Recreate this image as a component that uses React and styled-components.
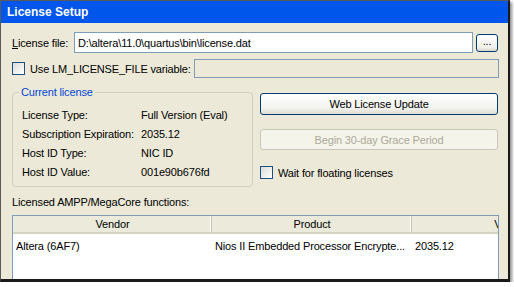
import styled, { createGlobalStyle } from 'styled-components'

const Global = createGlobalStyle`
	html, body { margin: 0; padding: 0; background: #ffffff; }
	body { font-family: "Liberation Sans", Arial, sans-serif; font-size: 11px; letter-spacing: -0.15px; color: #000; }
`

const Frame = styled.div`
	width: 507px;
	height: 278px;
	box-sizing: content-box;
	border-top: 1px solid #5a5a5a;
	border-left: 1px solid #5a5a5a;
	border-right: 2px solid #1a1a1a;
	border-bottom: 3px solid #1a1a1a;
	box-shadow: 2px 2px 3px rgba(0, 0, 0, 0.45);
	background: #ece9d8;
	overflow: hidden;
	display: flex;
	flex-direction: column;
`

const TitleBar = styled.div`
	height: 22px;
	flex: none;
	background: #0055ea;
	color: #fff;
	font-weight: bold;
	font-size: 12px;
	letter-spacing: 0;
	display: flex;
	align-items: center;
	padding-left: 6px;
	padding-bottom: 1px;
	box-sizing: border-box;
`

const Body = styled.div`
	flex: 1;
	padding: 9px 9px 0 11px;
	display: flex;
	flex-direction: column;
	min-height: 0;
`

const Row = styled.div`
	display: flex;
	align-items: center;
	height: ${p => p.$h || 21}px;
	margin-top: ${p => p.$mt || 0}px;
`

const Label = styled.span`
	width: ${p => (p.$w ? `${p.$w}px` : 'auto')};
	flex: none;
	white-space: nowrap;
	overflow: hidden;
`

const TextField = styled.div`
	flex: 1;
	height: ${p => p.$h || 21}px;
	box-sizing: border-box;
	border: 1px solid #7f9db9;
	background: ${p => (p.$disabled ? '#ece9d8' : '#fff')};
	display: flex;
	align-items: center;
	padding-left: 3px;
	white-space: nowrap;
	overflow: hidden;
`

const SmallButton = styled.div`
	width: 22px;
	height: 18px;
	flex: none;
	box-sizing: border-box;
	border: 1px solid #003c74;
	border-radius: 3px;
	background: linear-gradient(#ffffff, #f0efe8 80%, #d8d5c8);
	display: flex;
	align-items: center;
	justify-content: center;
	padding-bottom: 3px;
	margin: 0 1px 0 3px;
`

const Box = styled.span`
	width: 13px;
	height: 13px;
	flex: none;
	box-sizing: border-box;
	border: 1px solid #1c5180;
	background: linear-gradient(135deg, #dcdcd7, #ffffff);
	margin-right: 5px;
`

const Middle = styled.div`
	display: grid;
	grid-template-columns: 241px 238px;
	column-gap: 7px;
	margin-top: 14px;
`

const Group = styled.div`
	position: relative;
	height: 95px;
	box-sizing: border-box;
	border: 1px solid #d0d0bf;
	border-radius: 4px;
	padding: 12px 0 0 9px;
`

const Legend = styled.span`
	position: absolute;
	left: 6px;
	top: -8px;
	padding: 0 2px;
	background: #ece9d8;
	color: #0046d5;
	line-height: 14px;
`

const InfoGrid = styled.div`
	display: grid;
	grid-template-columns: 119px auto;
	grid-auto-rows: 19px;
	align-items: center;
`

const Side = styled.div`
	display: flex;
	flex-direction: column;
	padding-top: 1px;
`

const Button = styled.div`
	height: ${p => p.$h || 21}px;
	box-sizing: border-box;
	border: 1px solid ${p => (p.$disabled ? '#c9c7ba' : '#003c74')};
	border-radius: 3px;
	background: ${p => (p.$disabled ? '#f5f4ea' : 'linear-gradient(#ffffff, #f3f3ef 70%, #e0ddd2)')};
	color: ${p => (p.$disabled ? '#aca899' : '#000')};
	display: flex;
	align-items: center;
	justify-content: center;
	margin-top: ${p => p.$mt || 0}px;
`

const SectionLabel = styled.div`
	margin-top: 9px;
	line-height: 13px;
`

const List = styled.div`
	margin-top: 6px;
	flex: 1;
	border: 1px solid #7f9db9;
	border-bottom: none;
	background: #fff;
	overflow: hidden;
`

const ListRow = styled.div`
	display: grid;
	grid-template-columns: 199px 200px 200px;
	height: ${p => (p.$head ? 18 : 17)}px;
	align-items: center;
	white-space: nowrap;
	${p => p.$head && `
		background: #ebeadb;
		border-bottom: 2px solid #d6d2c2;
		box-sizing: border-box;
		margin-bottom: 3px;
	`}
`

const HeadCell = styled.div`
	height: 100%;
	display: flex;
	align-items: center;
	justify-content: center;
	box-shadow: inset -1px 0 0 #c7c5b2, inset -2px 0 0 #fff;
	overflow: hidden;
`

const Cell = styled.div`
	padding-left: 3px;
	overflow: hidden;
`

export default function App() {
	return (
		<>
			<Global />
			<Frame>
				<TitleBar>License Setup</TitleBar>
				<Body>
					<Row>
						<Label $w={62}><u>L</u>icense file:</Label>
						<TextField>D:\altera\11.0\quartus\bin\license.dat</TextField>
						<SmallButton>...</SmallButton>
					</Row>
					<Row $h={19} $mt={6}>
						<Box />
						<Label $w={164}>Use LM_LICENSE_FILE variable:</Label>
						<TextField $h={19} $disabled />
					</Row>
					<Middle>
						<Group>
							<Legend>Current license</Legend>
							<InfoGrid>
								<span>License Type:</span><span>Full Version (Eval)</span>
								<span>Subscription Expiration:</span><span>2035.12</span>
								<span>Host ID Type:</span><span>NIC ID</span>
								<span>Host ID Value:</span><span>001e90b676fd</span>
							</InfoGrid>
						</Group>
						<Side>
							<Button $h={22}>Web License Update</Button>
							<Button $disabled $mt={14}>Begin 30-day Grace Period</Button>
							<Row $h={13} $mt={16}>
								<Box />
								<Label>Wait for floating licenses</Label>
							</Row>
						</Side>
					</Middle>
					<SectionLabel>Licensed AMPP/MegaCore functions:</SectionLabel>
					<List>
						<ListRow $head>
							<HeadCell>Vendor</HeadCell>
							<HeadCell>Product</HeadCell>
							<HeadCell>Version</HeadCell>
						</ListRow>
						<ListRow>
							<Cell>Altera (6AF7)</Cell>
							<Cell>Nios II Embedded Processor Encrypte...</Cell>
							<Cell>2035.12</Cell>
						</ListRow>
					</List>
				</Body>
			</Frame>
		</>
	)
}
